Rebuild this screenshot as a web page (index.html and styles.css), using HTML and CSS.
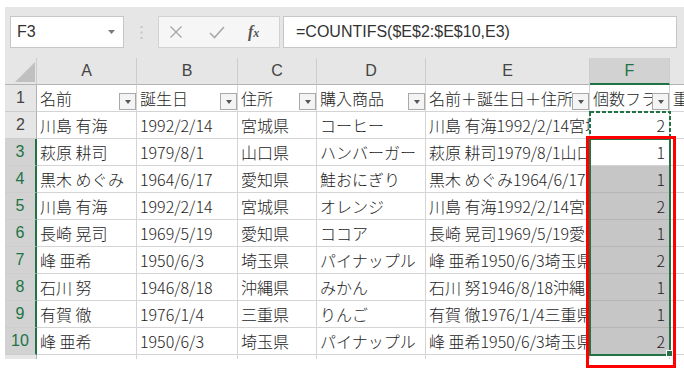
FILE: index.html
```html
<!doctype html>
<html lang="ja">
<head>
  <meta charset="utf-8">
  <title>COUNTIFS</title>
  <link rel="stylesheet" href="styles.css">
</head>
<body>
<div class="page">

  <div class="toolbar">
    <div class="namebox">
      <span>F3</span>
      <svg class="caret" width="7" height="4" viewBox="0 0 7 4"><path d="M0 0h7L3.5 4z" fill="#7a7a7a"/></svg>
    </div>
    <div class="grip">
      <svg width="3" height="15" viewBox="0 0 3 15"><rect x="0.5" y="1" width="2" height="2" fill="#c4c4c4"/><rect x="0.5" y="6.5" width="2" height="2" fill="#c4c4c4"/><rect x="0.5" y="12" width="2" height="2" fill="#c4c4c4"/></svg>
    </div>
    <div class="fxbox">
      <svg class="btn" width="16" height="16" viewBox="0 0 16 16"><path d="M2.5 2.5l11 11M13.5 2.5l-11 11" stroke="#a9a9a9" stroke-width="1.4" fill="none"/></svg>
      <svg class="btn" width="18" height="16" viewBox="0 0 18 16"><path d="M2 9l4.5 4.5L16 3" stroke="#a9a9a9" stroke-width="1.6" fill="none"/></svg>
      <span class="fx">f<small>x</small></span>
    </div>
    <div class="formula">=COUNTIFS($E$2:$E$10,E3)</div>
  </div>

  <div class="sheet">
    <div class="corner"><i></i></div>
    <div class="colhead">A</div>
    <div class="colhead">B</div>
    <div class="colhead">C</div>
    <div class="colhead">D</div>
    <div class="colhead">E</div>
    <div class="colhead picked">F</div>
    <div class="colhead">G</div>

    <div class="rowhead">1</div>
    <div class="cell head"><span>名前</span><b class="filter"></b></div>
    <div class="cell head"><span>誕生日</span><b class="filter"></b></div>
    <div class="cell head"><span>住所</span><b class="filter"></b></div>
    <div class="cell head"><span>購入商品</span><b class="filter"></b></div>
    <div class="cell head"><span>名前＋誕生日＋住所</span><b class="filter"></b></div>
    <div class="cell head"><span>個数フラグ</span><b class="filter"></b></div>
    <div class="cell"><span>重複</span></div>

    <div class="rowhead">2</div>
    <div class="cell">川島 有海</div><div class="cell">1992/2/14</div><div class="cell">宮城県</div><div class="cell">コーヒー</div>
    <div class="cell">川島 有海1992/2/14宮城県</div><div class="cell num">2</div><div class="cell"></div>

    <div class="rowhead picked">3</div>
    <div class="cell">萩原 耕司</div><div class="cell">1979/8/1</div><div class="cell">山口県</div><div class="cell">ハンバーガー</div>
    <div class="cell">萩原 耕司1979/8/1山口県</div><div class="cell num">1</div><div class="cell"></div>

    <div class="rowhead picked">4</div>
    <div class="cell">黒木 めぐみ</div><div class="cell">1964/6/17</div><div class="cell">愛知県</div><div class="cell">鮭おにぎり</div>
    <div class="cell">黒木 めぐみ1964/6/17愛知県</div><div class="cell num shade">1</div><div class="cell"></div>

    <div class="rowhead picked">5</div>
    <div class="cell">川島 有海</div><div class="cell">1992/2/14</div><div class="cell">宮城県</div><div class="cell">オレンジ</div>
    <div class="cell">川島 有海1992/2/14宮城県</div><div class="cell num shade">2</div><div class="cell"></div>

    <div class="rowhead picked">6</div>
    <div class="cell">長崎 晃司</div><div class="cell">1969/5/19</div><div class="cell">愛知県</div><div class="cell">ココア</div>
    <div class="cell">長崎 晃司1969/5/19愛知県</div><div class="cell num shade">1</div><div class="cell"></div>

    <div class="rowhead picked">7</div>
    <div class="cell">峰 亜希</div><div class="cell">1950/6/3</div><div class="cell">埼玉県</div><div class="cell">パイナップル</div>
    <div class="cell">峰 亜希1950/6/3埼玉県</div><div class="cell num shade">2</div><div class="cell"></div>

    <div class="rowhead picked">8</div>
    <div class="cell">石川 努</div><div class="cell">1946/8/18</div><div class="cell">沖縄県</div><div class="cell">みかん</div>
    <div class="cell">石川 努1946/8/18沖縄県</div><div class="cell num shade">1</div><div class="cell"></div>

    <div class="rowhead picked">9</div>
    <div class="cell">有賀 徹</div><div class="cell">1976/1/4</div><div class="cell">三重県</div><div class="cell">りんご</div>
    <div class="cell">有賀 徹1976/1/4三重県</div><div class="cell num shade">1</div><div class="cell"></div>

    <div class="rowhead picked">10</div>
    <div class="cell">峰 亜希</div><div class="cell">1950/6/3</div><div class="cell">埼玉県</div><div class="cell">パイナップル</div>
    <div class="cell">峰 亜希1950/6/3埼玉県</div><div class="cell num shade">2</div><div class="cell"></div>

    <div class="rowhead"></div>
    <div class="cell"></div><div class="cell"></div><div class="cell"></div><div class="cell"></div>
    <div class="cell"></div><div class="cell"></div><div class="cell"></div>
  </div>

  <!-- copy marquee around F2 -->
  <svg class="marquee" width="82" height="29" viewBox="0 0 82 29">
    <rect x="1" y="1" width="80" height="27" fill="none" stroke="#217346" stroke-width="2" stroke-dasharray="4 2"/>
  </svg>
  <!-- selected range F3:F10 -->
  <div class="selection"></div>
  <div class="handle"></div>
  <!-- red highlight box -->
  <div class="mark"></div>

</div>
</body>
</html>
```

FILE: styles.css
```css
body {
  margin: 0;
  background: #fff;
}
.page {
  position: relative;
  width: 684px;
  height: 375px;
  overflow: hidden;
  font-family: "Noto Sans CJK JP", sans-serif;
}

/* formula bar */
.toolbar {
  margin: 7px 0 0 5px;
  height: 51px;
  box-sizing: border-box;
  padding: 9px 7px 0 5px;
  background: #e6e6e6;
  display: flex;
  align-items: flex-start;
}
.namebox {
  width: 114px;
  height: 32px;
  box-sizing: border-box;
  border: 1px solid #c6c6c6;
  background: #fff;
  display: flex;
  align-items: center;
  justify-content: space-between;
  padding: 0 8px 0 6px;
  font: 16px "Liberation Sans", sans-serif;
  color: #333;
}
.grip {
  width: 34px;
  height: 32px;
  display: flex;
  align-items: center;
  justify-content: center;
}
.fxbox {
  width: 122px;
  height: 32px;
  box-sizing: border-box;
  border: 1px solid #d2d2d2;
  background: #f6f6f6;
  display: flex;
  align-items: center;
  padding-left: 9px;
  gap: 26px;
}
.fxbox .btn + .btn {
  margin-left: -2px;
}
.fx {
  font: italic bold 16px "Liberation Serif", serif;
  color: #555;
  margin-left: -4px;
}
.fx small {
  font-size: 12px;
}
.formula {
  flex: 1;
  margin-left: 3px;
  height: 32px;
  box-sizing: border-box;
  border: 1px solid #c6c6c6;
  background: #fff;
  padding-left: 12px;
  font: 16px/30px "Liberation Sans", sans-serif;
  color: #333;
}

/* grid */
.sheet {
  margin-left: 5px;
  width: 679px;
  height: 301px;
  overflow: hidden;
  display: grid;
  grid-template-columns: 32px 100px 101px 79px 109px 164px 80px 100px;
  grid-auto-rows: 27px;
  font-size: 16px;
  font-weight: 300;
  color: #1e1e1e;
}
.corner,
.colhead,
.rowhead,
.cell {
  box-sizing: border-box;
  border-right: 1px solid #d4d4d4;
  border-bottom: 1px solid #d4d4d4;
  white-space: nowrap;
  overflow: hidden;
}
.corner {
  background: #e6e6e6;
  border-color: #cdcdcd;
  border-bottom-color: #b4b4b4;
  display: flex;
  align-items: flex-end;
  justify-content: flex-end;
  padding: 0 1px 2px 0;
}
.corner i {
  width: 0;
  height: 0;
  border-left: 20px solid transparent;
  border-bottom: 20px solid #c0c0c0;
}
.colhead {
  background: #e6e6e6;
  border-right-color: #cdcdcd;
  border-bottom-color: #b4b4b4;
  text-align: center;
  font: 16px/26px "Liberation Sans", sans-serif;
  color: #444;
}
.colhead.picked {
  background: #d2d2d2;
  color: #217346;
  border-bottom: 2px solid #217346;
}
.rowhead {
  background: #e6e6e6;
  border-right-color: #b4b4b4;
  border-bottom-color: #cdcdcd;
  text-align: center;
  font: 16px/26px "Liberation Sans", sans-serif;
  color: #444;
}
.rowhead.picked {
  background: #d2d2d2;
  color: #217346;
  border-right: 2px solid #217346;
}
.cell {
  background: #fff;
  padding-left: 3px;
  line-height: 26px;
}
.cell.head {
  display: flex;
  align-items: flex-end;
}
.cell.head span {
  flex: 1;
  min-width: 0;
  overflow: hidden;
  align-self: center;
}
.filter {
  flex: none;
  width: 17px;
  height: 17px;
  box-sizing: border-box;
  border: 1px solid #a9a9a9;
  background: #f4f4f4;
  margin-bottom: 1px;
  display: flex;
  align-items: center;
  justify-content: center;
}
.filter::after {
  content: "";
  border-left: 3px solid transparent;
  border-right: 3px solid transparent;
  border-top: 4px solid #555;
  margin-top: 1px;
}
.num {
  text-align: right;
  padding-right: 4px;
}
.shade {
  background: #c6c6c6;
  border-bottom-color: #b5b5b5;
}

/* overlays */
.marquee {
  position: absolute;
  left: 589px;
  top: 111px;
}
.selection {
  position: absolute;
  left: 589px;
  top: 138px;
  width: 82px;
  height: 218px;
  box-sizing: border-box;
  border: 2px solid #217346;
}
.handle {
  position: absolute;
  left: 666px;
  top: 350px;
  width: 7px;
  height: 7px;
  box-sizing: border-box;
  border: 1px solid #fff;
  background: #217346;
}
.mark {
  position: absolute;
  left: 586px;
  top: 136px;
  width: 90px;
  height: 232px;
  box-sizing: border-box;
  border: 3px solid #f00;
}
```
